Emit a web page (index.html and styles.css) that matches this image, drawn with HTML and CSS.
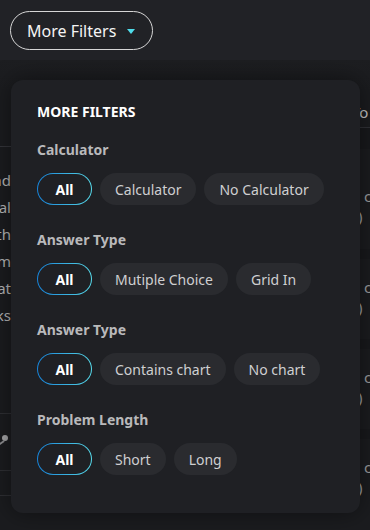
FILE: index.html
```html
<!DOCTYPE html>
<html lang="en">
<head>
  <meta charset="UTF-8">
  <meta name="viewport" content="width=device-width, initial-scale=1.0">
  <title>More Filters</title>
  <link rel="stylesheet" href="styles.css">
</head>
<body>

<div class="toolbar">
  <button class="filter-btn">More Filters <span class="caret"></span></button>
</div>

<div class="page">
  <div class="left-col">
    <div class="left-head"></div>
    <div class="left-text">
      <p>ad</p>
      <p>Total</p>
      <p>with</p>
      <p>Sum</p>
      <p>at</p>
      <p>asks</p>
    </div>
    <div class="left-row"><span class="dot"></span></div>
    <div class="left-row small"></div>
  </div>

  <div class="right-col">
    <div class="right-head">To</div>
    <div class="band tall"></div>
    <div class="card first"><span class="c">c</span><span>)</span></div>
    <div class="band"></div>
    <div class="card"><span class="c">c</span><span>)</span></div>
    <div class="band"></div>
    <div class="card"><span class="c">c</span><span>)</span></div>
    <div class="band"></div>
    <div class="card"><span class="c">c</span><span>)</span></div>
  </div>

  <div class="panel">
    <h2>MORE FILTERS</h2>

    <div class="group">
      <h3>Calculator</h3>
      <div class="chips">
        <button class="chip active">All</button>
        <button class="chip">Calculator</button>
        <button class="chip">No Calculator</button>
      </div>
    </div>

    <div class="group">
      <h3>Answer Type</h3>
      <div class="chips">
        <button class="chip active">All</button>
        <button class="chip">Mutiple Choice</button>
        <button class="chip">Grid In</button>
      </div>
    </div>

    <div class="group">
      <h3>Answer Type</h3>
      <div class="chips">
        <button class="chip active">All</button>
        <button class="chip">Contains chart</button>
        <button class="chip">No chart</button>
      </div>
    </div>

    <div class="group">
      <h3>Problem Length</h3>
      <div class="chips">
        <button class="chip active">All</button>
        <button class="chip">Short</button>
        <button class="chip">Long</button>
      </div>
    </div>
  </div>
</div>

</body>
</html>
```

FILE: styles.css
```css
body {
  font-family: 'Noto Sans', 'Open Sans', sans-serif;
  background-color: #212226;
  color: #fff;
  margin: 0;
  padding: 0;
  width: 370px;
  height: 530px;
  overflow: hidden;
}
.toolbar {
  height: 60px;
  padding: 11px 10px 0;
  box-sizing: border-box;
}
.filter-btn {
  height: 39px;
  padding: 0 17px 0 16px;
  border: 1px solid #d6d6d6;
  border-radius: 20px;
  background: transparent;
  color: #f4f4f4;
  font-family: inherit;
  font-size: 16px;
  display: flex;
  align-items: center;
  gap: 11px;
}
.caret {
  width: 0;
  height: 0;
  border-left: 4.5px solid transparent;
  border-right: 4.5px solid transparent;
  border-top: 5px solid #4fdcea;
  margin-top: 1px;
}

/* page behind the dropdown */
.page {
  position: relative;
  height: 470px;
  display: flex;
  justify-content: space-between;
  background: linear-gradient(#1d1e21, #1b1c1f 30px);
  overflow: hidden;
}
.left-col {
  width: 70px;
  margin-left: -59px;
  color: #b4b4b6;
  font-size: 15px;
}
.left-head {
  height: 86px;
  border-bottom: 1px solid #34353a;
}
.left-text {
  padding: 20px 0 84px;
  border-bottom: 1px solid #2e2f33;
  text-align: right;
}
.left-text p {
  margin: 0;
  line-height: 27px;
}
.left-row {
  height: 56px;
  border-bottom: 1px solid #2e2f33;
  position: relative;
}
.left-row.small {
  height: 24px;
}
.dot {
  position: absolute;
  right: 3px;
  top: 21px;
  width: 6px;
  height: 6px;
  border-radius: 50%;
  background: #a5a5a7;
}
.dot::before {
  content: "";
  position: absolute;
  right: 4px;
  top: 5px;
  width: 6px;
  height: 1.5px;
  background: #8d8d90;
  transform: rotate(-35deg);
  transform-origin: right center;
}
.right-col {
  width: 12px;
  color: #9d9d9f;
  font-size: 15px;
}
.right-head {
  height: 68px;
  padding-top: 42px;
  margin-left: -6px;
  box-sizing: border-box;
  color: #c4c4c6;
  border-bottom: 1px solid #303136;
}
.band {
  height: 10px;
  background: #18191c;
}
.band.tall {
  height: 21px;
}
.card {
  height: 80px;
  padding-top: 18px;
  box-sizing: border-box;
  display: flex;
  flex-direction: column;
}
.card.first {
  height: 100px;
  padding-top: 37px;
}
.card span {
  line-height: 20px;
}
.card .c {
  padding-left: 6px;
}

/* dropdown */
.panel {
  position: absolute;
  left: 11px;
  top: 20px;
  width: 349px;
  height: 433px;
  box-sizing: border-box;
  padding: 22px 26px 0;
  background-color: #1f2024;
  border-radius: 12px;
  box-shadow: 0 0 24px rgba(0, 0, 0, 0.45);
}
.panel h2 {
  margin: 0 0 18px;
  font-size: 14px;
  font-weight: 700;
  line-height: 20px;
  color: #fff;
}
.group {
  margin-bottom: 25px;
}
.group h3 {
  margin: 0 0 13px;
  font-size: 14px;
  font-weight: 700;
  line-height: 20px;
  color: #b9b9bb;
}
.chips {
  display: flex;
  gap: 8px;
}
.chip {
  height: 32px;
  padding: 0 14px;
  border: 1.5px solid transparent;
  border-radius: 16px;
  background-color: #2a2b2f;
  color: #cfcfd1;
  font-family: inherit;
  font-size: 14px;
}
.chip.active {
  width: 55px;
  padding: 0;
  color: #fff;
  font-weight: 700;
  background: linear-gradient(#1f2024, #1f2024) padding-box,
              linear-gradient(90deg, #1682d8, #56d8e8) border-box;
}
```
